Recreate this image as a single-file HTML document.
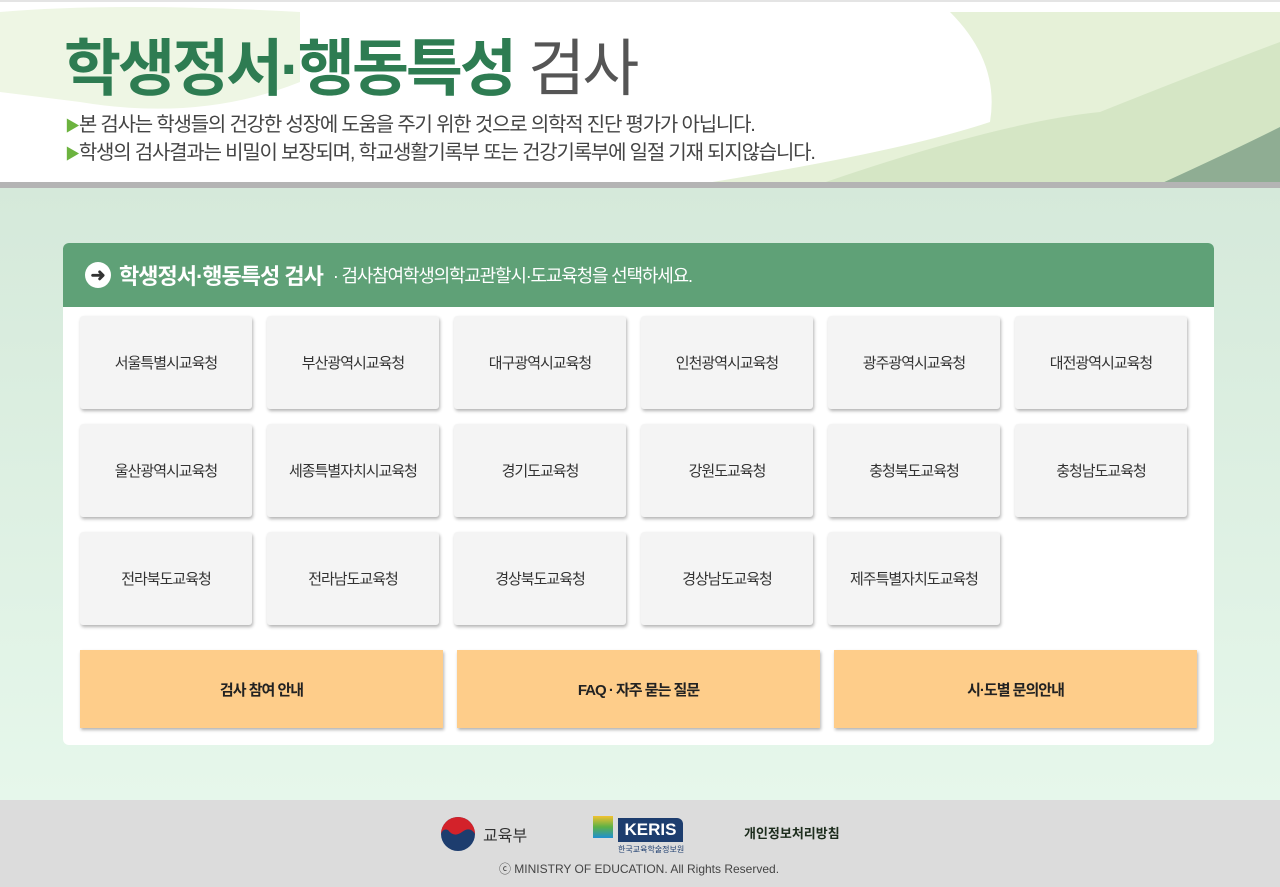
<!DOCTYPE html>
<html><head><meta charset="utf-8"><style>
*{margin:0;padding:0;box-sizing:border-box}
body{width:1280px;height:887px;overflow:hidden;font-family:"Liberation Sans","Noto Sans CJK KR",sans-serif;background:#fff;position:relative}
.hd{position:absolute;left:0;top:0;width:1280px;height:182px;background:#fff;overflow:hidden;border-top:2px solid #e4e4e4}
.band{position:absolute;left:0;top:182px;width:1280px;height:6px;background:#b4b4b4}
.main{position:absolute;left:0;top:188px;width:1280px;height:612px;background:linear-gradient(#d5e9da,#e6f7eb)}
.ft{position:absolute;left:0;top:800px;width:1280px;height:87px;background:#dcdcdc}
.panel{position:absolute;left:63px;top:243px;width:1151px;height:502px;background:#fff;border-radius:6px;overflow:hidden}
.ph{height:64px;background:#5fa177;color:#fff;display:flex;align-items:center;padding-left:22px}
.b{position:absolute;width:172px;height:93px;background:#f4f4f4;border-radius:3px;box-shadow:1px 2px 3px rgba(0,0,0,.3);display:flex;align-items:center;justify-content:center;font-size:15px;color:#333;letter-spacing:-1px}
.o{position:absolute;top:407px;width:363px;height:78px;background:#fecd8a;box-shadow:1px 2px 3px rgba(0,0,0,.3);display:flex;align-items:center;justify-content:center;font-size:15px;font-weight:bold;color:#222;letter-spacing:-1px}
</style></head><body>
<div class="hd">
<svg width="1280" height="182" style="position:absolute;left:0;top:0">
<path d="M0 10 Q120 0 300 10 L300 80 Q200 120 80 100 L0 90Z" fill="#eef6e4"/>
<path d="M950 10 L1280 10 L1280 182 L700 182 Q900 150 990 120 Q1000 60 950 10Z" fill="#e6f1d8"/>
<path d="M820 182 Q1000 120 1100 110 Q1200 70 1280 40 L1280 182Z" fill="#d5e6c5"/>
<path d="M1160 182 Q1230 150 1280 125 L1280 182Z" fill="#8fad93"/>
</svg>
<div style="position:absolute;left:64px;top:30px;font-size:62px;font-weight:bold;color:#2e7c52;letter-spacing:-3px;line-height:76px">학생정서·행동특성 <span style="font-weight:normal;color:#555">검사</span></div>
<div style="position:absolute;left:65px;top:110px;font-size:20px;color:#444;letter-spacing:-1.2px;line-height:27px"><span style="color:#6cb33f;font-size:15px">▶</span>본 검사는 학생들의 건강한 성장에 도움을 주기 위한 것으로 의학적 진단 평가가 아닙니다.<br><span style="color:#6cb33f;font-size:15px">▶</span>학생의 검사결과는 비밀이 보장되며, 학교생활기록부 또는 건강기록부에 일절 기재 되지않습니다.</div>
</div>
<div class="band"></div>
<div class="main"></div>
<div class="panel">
<div class="ph"><span style="display:inline-block;width:26px;height:26px;border-radius:50%;background:#fff;color:#333;font-weight:bold;text-align:center;line-height:26px;font-size:18px;margin-right:8px">➜</span><span style="font-size:22px;font-weight:bold;letter-spacing:-1px;color:#fff">학생정서·행동특성 검사</span><span style="font-size:18px;margin-left:10px;letter-spacing:-1.2px">· 검사참여학생의학교관할시·도교육청을 선택하세요.</span></div>
<div class="b" style="left:17px;top:73px">서울특별시교육청</div>
<div class="b" style="left:204px;top:73px">부산광역시교육청</div>
<div class="b" style="left:391px;top:73px">대구광역시교육청</div>
<div class="b" style="left:578px;top:73px">인천광역시교육청</div>
<div class="b" style="left:765px;top:73px">광주광역시교육청</div>
<div class="b" style="left:952px;top:73px">대전광역시교육청</div>
<div class="b" style="left:17px;top:181px">울산광역시교육청</div>
<div class="b" style="left:204px;top:181px">세종특별자치시교육청</div>
<div class="b" style="left:391px;top:181px">경기도교육청</div>
<div class="b" style="left:578px;top:181px">강원도교육청</div>
<div class="b" style="left:765px;top:181px">충청북도교육청</div>
<div class="b" style="left:952px;top:181px">충청남도교육청</div>
<div class="b" style="left:17px;top:289px">전라북도교육청</div>
<div class="b" style="left:204px;top:289px">전라남도교육청</div>
<div class="b" style="left:391px;top:289px">경상북도교육청</div>
<div class="b" style="left:578px;top:289px">경상남도교육청</div>
<div class="b" style="left:765px;top:289px">제주특별자치도교육청</div>
<div class="o" style="left:17px">검사 참여 안내</div>
<div class="o" style="left:394px">FAQ · 자주 묻는 질문</div>
<div class="o" style="left:771px">시·도별 문의안내</div>
</div>
<div class="ft">
<svg width="36" height="36" style="position:absolute;left:440px;top:16px" viewBox="0 0 36 36"><circle cx="18" cy="18" r="17" fill="#1d3d6e"/><path d="M1 18 A17 17 0 0 1 35 18 Q30 10 22 16 Q14 22 8 14 Q3 12 1 18Z" fill="#d3222a"/></svg>
<div style="position:absolute;left:483px;top:22px;font-size:16px;color:#333">교육부</div>
<div style="position:absolute;left:593px;top:16px;width:20px;height:22px;background:linear-gradient(#f2c230,#5cb146 50%,#1f8fd1)"></div>
<div style="position:absolute;left:618px;top:18px;width:65px;height:24px;background:#1d3d6e;color:#fff;font-weight:bold;font-size:17px;text-align:center;line-height:24px;border-radius:0 6px 0 0">KERIS</div>
<div style="position:absolute;left:618px;top:44px;font-size:8px;color:#1d3d6e">한국교육학술정보원</div>
<div style="position:absolute;left:744px;top:23px;font-size:13px;font-weight:bold;color:#1c2c1c">개인정보처리방침</div>
<div style="position:absolute;left:0;width:1278px;top:60px;text-align:center;font-size:12px;color:#444">ⓒ MINISTRY OF EDUCATION. All Rights Reserved.</div>
</div>
</body></html>
